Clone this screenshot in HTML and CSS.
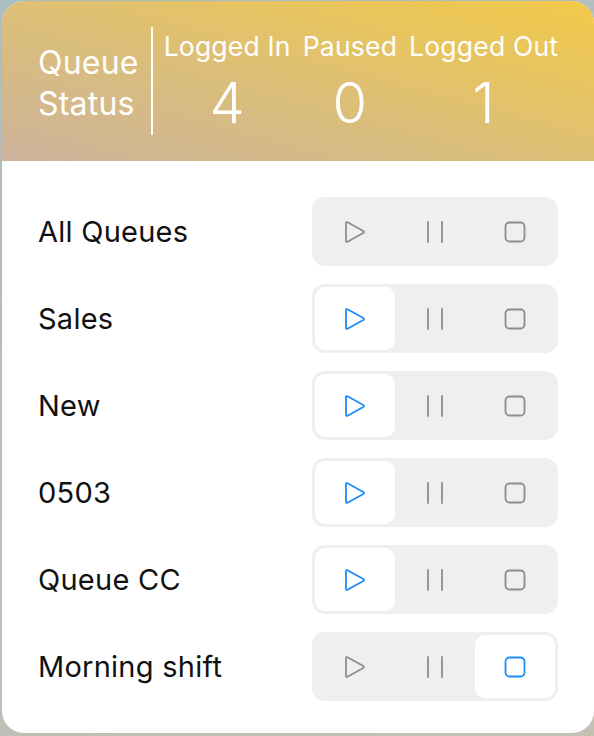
FILE: index.html
```html
<!DOCTYPE html>
<html>
<head>
<meta charset="utf-8">
<link rel="stylesheet" href="styles.css">
</head>
<body>
<div class="card">
  <header class="header">
    <div class="title">Queue<br>Status</div>
    <div class="divider"></div>
    <div class="stats">
      <div class="stat"><div class="stat-label">Logged In</div><div class="stat-num">4</div></div>
      <div class="stat"><div class="stat-label">Paused</div><div class="stat-num">0</div></div>
      <div class="stat"><div class="stat-label">Logged Out</div><div class="stat-num">1</div></div>
    </div>
  </header>
  <main class="list">
    <div class="row">
      <div class="name">All Queues</div>
      <div class="seg">
        <div class="opt"><svg class="ico" width="22" height="24" viewBox="0 0 22 24"><path d="M2 3.2 Q2 1.5 3.5 2.3 L19.3 11 Q20.6 12 19.3 13 L3.5 21.7 Q2 22.5 2 20.8 Z"/></svg></div>
        <div class="opt"><svg class="ico" width="22" height="24" viewBox="0 0 22 24"><path d="M4 2 V22 M18 2 V22"/></svg></div>
        <div class="opt"><svg class="ico" width="22" height="22" viewBox="0 0 22 22"><rect x="1.5" y="1.5" width="19" height="19" rx="4"/></svg></div>
      </div>
    </div>
    <div class="row">
      <div class="name">Sales</div>
      <div class="seg">
        <div class="opt on"><svg class="ico" width="22" height="24" viewBox="0 0 22 24"><path d="M2 3.2 Q2 1.5 3.5 2.3 L19.3 11 Q20.6 12 19.3 13 L3.5 21.7 Q2 22.5 2 20.8 Z"/></svg></div>
        <div class="opt"><svg class="ico" width="22" height="24" viewBox="0 0 22 24"><path d="M4 2 V22 M18 2 V22"/></svg></div>
        <div class="opt"><svg class="ico" width="22" height="22" viewBox="0 0 22 22"><rect x="1.5" y="1.5" width="19" height="19" rx="4"/></svg></div>
      </div>
    </div>
    <div class="row">
      <div class="name">New</div>
      <div class="seg">
        <div class="opt on"><svg class="ico" width="22" height="24" viewBox="0 0 22 24"><path d="M2 3.2 Q2 1.5 3.5 2.3 L19.3 11 Q20.6 12 19.3 13 L3.5 21.7 Q2 22.5 2 20.8 Z"/></svg></div>
        <div class="opt"><svg class="ico" width="22" height="24" viewBox="0 0 22 24"><path d="M4 2 V22 M18 2 V22"/></svg></div>
        <div class="opt"><svg class="ico" width="22" height="22" viewBox="0 0 22 22"><rect x="1.5" y="1.5" width="19" height="19" rx="4"/></svg></div>
      </div>
    </div>
    <div class="row">
      <div class="name">0503</div>
      <div class="seg">
        <div class="opt on"><svg class="ico" width="22" height="24" viewBox="0 0 22 24"><path d="M2 3.2 Q2 1.5 3.5 2.3 L19.3 11 Q20.6 12 19.3 13 L3.5 21.7 Q2 22.5 2 20.8 Z"/></svg></div>
        <div class="opt"><svg class="ico" width="22" height="24" viewBox="0 0 22 24"><path d="M4 2 V22 M18 2 V22"/></svg></div>
        <div class="opt"><svg class="ico" width="22" height="22" viewBox="0 0 22 22"><rect x="1.5" y="1.5" width="19" height="19" rx="4"/></svg></div>
      </div>
    </div>
    <div class="row">
      <div class="name">Queue CC</div>
      <div class="seg">
        <div class="opt on"><svg class="ico" width="22" height="24" viewBox="0 0 22 24"><path d="M2 3.2 Q2 1.5 3.5 2.3 L19.3 11 Q20.6 12 19.3 13 L3.5 21.7 Q2 22.5 2 20.8 Z"/></svg></div>
        <div class="opt"><svg class="ico" width="22" height="24" viewBox="0 0 22 24"><path d="M4 2 V22 M18 2 V22"/></svg></div>
        <div class="opt"><svg class="ico" width="22" height="22" viewBox="0 0 22 22"><rect x="1.5" y="1.5" width="19" height="19" rx="4"/></svg></div>
      </div>
    </div>
    <div class="row">
      <div class="name">Morning shift</div>
      <div class="seg">
        <div class="opt"><svg class="ico" width="22" height="24" viewBox="0 0 22 24"><path d="M2 3.2 Q2 1.5 3.5 2.3 L19.3 11 Q20.6 12 19.3 13 L3.5 21.7 Q2 22.5 2 20.8 Z"/></svg></div>
        <div class="opt"><svg class="ico" width="22" height="24" viewBox="0 0 22 24"><path d="M4 2 V22 M18 2 V22"/></svg></div>
        <div class="opt on"><svg class="ico" width="22" height="22" viewBox="0 0 22 22"><rect x="1.5" y="1.5" width="19" height="19" rx="4"/></svg></div>
      </div>
    </div>
  </main>
</div>
</body>
</html>
```
FILE: styles.css
```css
* { box-sizing: border-box; }
html, body { margin: 0; padding: 0; }
body {
  width: 594px;
  height: 736px;
  overflow: hidden;
  background: linear-gradient(160deg, #a9bfc2 0%, #b8bcbc 40%, #c4c0b4 100%);
  font-family: Inter, "Noto Sans", sans-serif;
  padding: 1px 0 3px 2px;
}
.card {
  width: 592px;
  height: 732px;
  background: #fff;
  border-radius: 22px;
  overflow: hidden;
  display: flex;
  flex-direction: column;
}
.header {
  height: 160px;
  flex: none;
  background: linear-gradient(to top right, #cdb39c 0%, #d9bd7e 40%, #e6c462 70%, #f2c94a 100%);
  display: flex;
  align-items: center;
  padding-left: 36px;
  color: #fff;
}
.title {
  font-size: 32px;
  line-height: 41px;
  padding-top: 3px;
  letter-spacing: 0.2px;
}
.divider {
  width: 2px;
  height: 108px;
  background: #fff;
  margin: 0 11px 0 12px;
  align-self: center;
}
.stats {
  display: flex;
  gap: 12px;
  align-self: stretch;
  padding-top: 29px;
}
.stat {
  display: flex;
  flex-direction: column;
  align-items: center;
}
.stat-label {
  font-size: 26.5px;
  line-height: 32px;
  letter-spacing: 0.2px;
}
.stat-num {
  font-size: 56px;
  line-height: 60px;
  margin-top: 11px;
  font-weight: 300;
}
.list {
  padding: 36px 36px 0 36px;
  display: flex;
  flex-direction: column;
  gap: 18px;
}
.row {
  display: flex;
  align-items: center;
  justify-content: space-between;
  height: 69px;
}
.name {
  font-size: 29px;
  letter-spacing: 0.25px;
  color: #111;
}
.seg {
  width: 246px;
  height: 69px;
  background: #efeff0;
  border-radius: 13px;
  padding: 3px;
  display: grid;
  grid-template-columns: repeat(3, 1fr);
}
.opt {
  display: flex;
  align-items: center;
  justify-content: center;
  border-radius: 10px;
}
.opt.on {
  background: #fff;
}
.ico {
  fill: none;
  stroke: #8d8d8f;
  stroke-width: 1.8;
  stroke-linejoin: round;
  stroke-linecap: round;
}
.opt.on .ico {
  stroke: #1c8cf7;
}
```
